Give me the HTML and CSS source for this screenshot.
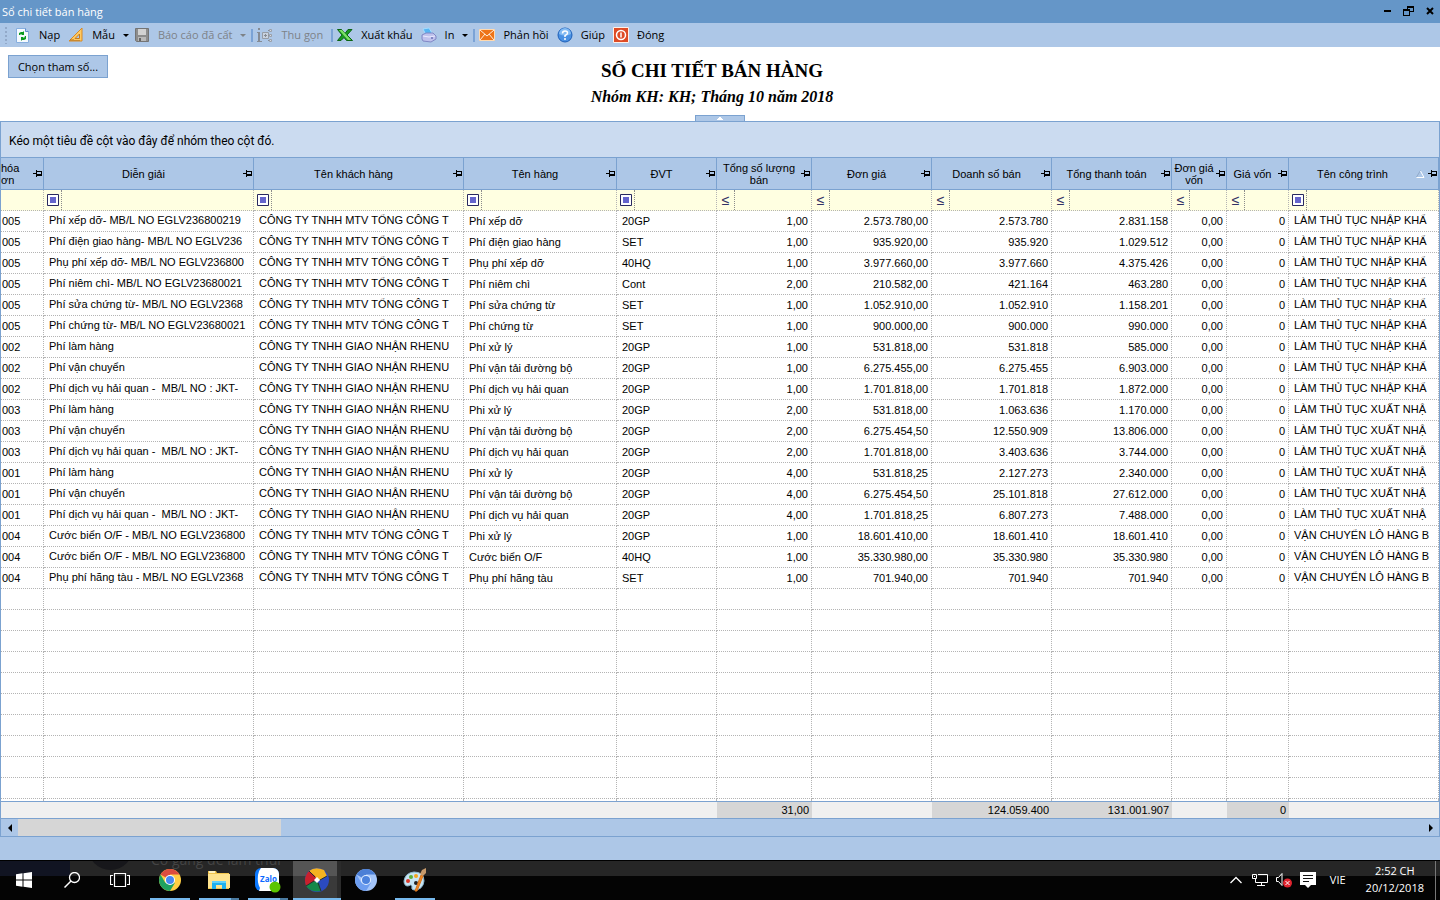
FILE: index.html
```html
<!DOCTYPE html>
<html lang="vi">
<head>
    <meta charset="UTF-8">
    <meta name="viewport" content="width=device-width, initial-scale=1.0">
    <title>Sổ chi tiết bán hàng</title>
    <link rel="stylesheet" href="styles.css">
</head>
<body>
    <svg class="defs" width="0" height="0">
        <symbol id="pin" viewBox="0 0 9 7">
            <path d="M0 3h3v1H0zM3 0h1v7H3zM4 1h5v5H4z" fill="#000"/>
            <path d="M4 2h4v2H4z" fill="#adc7e7"/>
        </symbol>
        <symbol id="box" viewBox="0 0 12 12">
            <path d="M.5 .5h11v11H.5z" fill="#fff" stroke="#29295f"/>
            <path d="M3 3h6v6H3z" fill="#6666cc"/>
        </symbol>
    </svg>

    <header class="titlebar">
        <span class="titlebar-text">Sổ chi tiết bán hàng</span>
        <button class="win-btn" aria-label="Thu nhỏ"><svg width="12" height="12"><path d="M2 5h7v2H2z"/></svg></button>
        <button class="win-btn" aria-label="Khôi phục"><svg width="12" height="12"><path d="M4 1h7v6H7V6h3V3H5v1H4zM0 4h7v7H0zM1 6v4h5V6z" fill-rule="evenodd"/></svg></button>
        <button class="win-btn" aria-label="Đóng cửa sổ"><svg width="12" height="12"><path d="M3 3l6 6M9 3l-6 6" stroke="#000" stroke-width="2"/></svg></button>
    </header>

    <nav class="toolbar">
        <span class="grip"></span>
        <button class="tool">
            <svg width="16" height="16"><path d="M1.500 1.500h9l3 3v11h-12z" fill="#f5faff" stroke="#86aede"/><path d="M10.500 1.500v3h3" fill="#b9d2f0" stroke="#5e8dcc"/><path d="M4 8V6l2-1h2l1-1v4H6l1-1H6L5 8zM11 9v3l-2 1H7l-1 1v-4h3l-1 1h1l1-2z" fill="#0b9a20"/></svg>
            Nạp
        </button>
        <button class="tool">
            <svg width="16" height="16"><path d="M1 14L14 1v13z" fill="#ffca63" stroke="#d98a22"/><path d="M7 11.500L11.500 7v4.500z" fill="#adc7e7" stroke="#c97b1c"/><path d="M3 14v-2M5 14v-2M7 14v-1M9 14v-1M11 14v-1" stroke="#a9681b"/></svg>
            Mẫu
            <svg class="caret" width="6" height="3"><path d="M0 0h6L3 3z"/></svg>
        </button>
        <button class="tool" disabled>
            <svg width="16" height="16"><path d="M1.500 1.500h13v13h-12l-1-1z" fill="#8d8d8d" stroke="#747474"/><path d="M4 2h8v6H4z" fill="#d2d2d2"/><path d="M4 10h8v4H4z" fill="#b9b9b9"/><path d="M5 11h2v3H5z" fill="#666"/></svg>
            Báo cáo đã cất
            <svg class="caret" width="6" height="3"><path d="M0 0h6L3 3z"/></svg>
        </button>
        <span class="sep"></span>
        <button class="tool" disabled>
            <svg width="16" height="16"><path d="M0 5h3v9h2v1H0v-1h1V6H0zM1 1h2v2H1z" fill="#858b94"/><path d="M5.500 5.500h6v6h-6z" fill="#c9d3e0" stroke="#969ca5"/><path d="M7 8.500h3M8.500 7v3M11 3.500h2M11 13.500h2M11.500 8.500h2" stroke="#858b94"/><path d="M12.500 2.500h2v2h-2zM12.500 7.500h2v2h-2zM12.500 12.500h2v2h-2z" fill="#d5dbe4" stroke="#999fa8"/></svg>
            Thu gọn
        </button>
        <span class="sep"></span>
        <button class="tool">
            <svg width="16" height="16"><path d="M.5 2.500h4l3.500 4 3-4h4l-5 5.500 5.500 5.500h-6L7 10.500l-3 3H.5L5 8z" fill="#199b22" stroke="#0b6413"/><path d="M2 3l9 10h3L5 3z" fill="#7ee067"/></svg>
            Xuất khẩu
        </button>
        <button class="tool">
            <svg width="16" height="16"><path d="M2 2l6-1 3 5-6 2z" fill="#58b5f2" stroke="#a3dcff"/><path d="M1 8l4-2 7 0 3 3v3l-5 3-8-1-1-2z" fill="#bfc1ec" stroke="#8087c5"/><path d="M2 9l6 1 6-1" fill="none" stroke="#e9eaff"/><circle cx="11" cy="11" r="1" fill="#6d73b8"/></svg>
            In
            <svg class="caret" width="6" height="3"><path d="M0 0h6L3 3z"/></svg>
        </button>
        <span class="sep"></span>
        <button class="tool">
            <svg width="16" height="16"><path d="M.5 2.500h15v11H.5z" fill="#ee7418" stroke="#ffd9ae"/><path d="M1 3l7 6 7-6M1 13l5-6M15 13l-5-6" fill="none" stroke="#fff1df"/></svg>
            Phản hồi
        </button>
        <button class="tool">
            <svg width="16" height="16"><circle cx="8" cy="8" r="7" fill="#4a91e3" stroke="#1d5fb8"/><path d="M2 7a6 6 0 0 1 12 0q-6 3-12 0" fill="#83bbf3"/><path d="M5.500 6.500q0-2.500 2.500-2.500t2.500 2Q10.500 7.500 8 8.500V10M8 11v2" fill="none" stroke="#fff" stroke-width="1.500"/></svg>
            Giúp
        </button>
        <button class="tool">
            <svg width="16" height="16"><path d="M.5 .5h15v15H.5z" fill="#de4b25" stroke="#fff0e8"/><circle cx="8" cy="8" r="4.500" fill="none" stroke="#fff" stroke-width="1.500"/><path d="M8 5.500v5" stroke="#fff" stroke-width="1.500"/></svg>
            Đóng
        </button>
    </nav>

    <section class="report-head">
        <button class="param-btn">Chọn tham số...</button>
        <div class="report-title">
            <h1>SỔ CHI TIẾT BÁN HÀNG</h1>
            <h2>Nhóm KH: KH; Tháng 10 năm 2018</h2>
        </div>
        <button class="collapse" aria-label="Thu gọn tiêu đề"><svg width="6" height="3"><path d="M2 0h2v1h1v1h1v1H0V2h1V1h1z" fill="#fff"/></svg></button>
    </section>

    <main class="grid">
        <div class="group-panel">Kéo một tiêu đề cột vào đây để nhóm theo cột đó.</div>
        <table class="sales">
            <colgroup>
                <col class="c-invoice"><col class="c-desc"><col class="c-desc"><col class="c-item"><col class="c-unit"><col class="c-qty">
                <col class="c-money"><col class="c-money"><col class="c-money"><col class="c-cost"><col class="c-cogs"><col class="c-project">
            </colgroup>
            <thead>
                <tr class="heads">
                    <th><div class="head head-cut"><span>hóa<br>ơn</span><svg class="pin"><use href="#pin"/></svg></div></th>
                    <th><div class="head"><span>Diễn giải</span><svg class="pin"><use href="#pin"/></svg></div></th>
                    <th><div class="head"><span>Tên khách hàng</span><svg class="pin"><use href="#pin"/></svg></div></th>
                    <th><div class="head"><span>Tên hàng</span><svg class="pin"><use href="#pin"/></svg></div></th>
                    <th><div class="head"><span>ĐVT</span><svg class="pin"><use href="#pin"/></svg></div></th>
                    <th><div class="head"><span>Tổng số lượng bán</span><svg class="pin"><use href="#pin"/></svg></div></th>
                    <th><div class="head"><span>Đơn giá</span><svg class="pin"><use href="#pin"/></svg></div></th>
                    <th><div class="head"><span>Doanh số bán</span><svg class="pin"><use href="#pin"/></svg></div></th>
                    <th><div class="head"><span>Tổng thanh toán</span><svg class="pin"><use href="#pin"/></svg></div></th>
                    <th><div class="head"><span>Đơn giá vốn</span><svg class="pin"><use href="#pin"/></svg></div></th>
                    <th><div class="head"><span>Giá vốn</span><svg class="pin"><use href="#pin"/></svg></div></th>
                    <th><div class="head"><span>Tên công trình</span><svg class="sort" width="9" height="8"><path d="M.5 7L4.500 .5" stroke="#8fa9c9"/><path d="M4.500 1L8 7.500H.5" fill="none" stroke="#fff"/></svg><svg class="pin"><use href="#pin"/></svg></div></th>
                </tr>
                <tr class="filters">
                    <td></td>
                    <td><div class="filter"><button aria-label="Kiểu lọc diễn giải"><svg class="box"><use href="#box"/></svg></button><input type="text" aria-label="Lọc diễn giải"></div></td>
                    <td><div class="filter"><button aria-label="Kiểu lọc khách hàng"><svg class="box"><use href="#box"/></svg></button><input type="text" aria-label="Lọc khách hàng"></div></td>
                    <td><div class="filter"><button aria-label="Kiểu lọc tên hàng"><svg class="box"><use href="#box"/></svg></button><input type="text" aria-label="Lọc tên hàng"></div></td>
                    <td><div class="filter"><button aria-label="Kiểu lọc ĐVT"><svg class="box"><use href="#box"/></svg></button><input type="text" aria-label="Lọc ĐVT"></div></td>
                    <td><div class="filter"><button>≤</button><input type="text" aria-label="Lọc số lượng"></div></td>
                    <td><div class="filter"><button>≤</button><input type="text" aria-label="Lọc đơn giá"></div></td>
                    <td><div class="filter"><button>≤</button><input type="text" aria-label="Lọc doanh số"></div></td>
                    <td><div class="filter"><button>≤</button><input type="text" aria-label="Lọc thanh toán"></div></td>
                    <td><div class="filter"><button>≤</button><input type="text" aria-label="Lọc đơn giá vốn"></div></td>
                    <td><div class="filter"><button>≤</button><input type="text" aria-label="Lọc giá vốn"></div></td>
                    <td><div class="filter"><button aria-label="Kiểu lọc công trình"><svg class="box"><use href="#box"/></svg></button><input type="text" aria-label="Lọc công trình"></div></td>
                </tr>
            </thead>
            <tbody>
                <tr><td>005</td><td>Phí xếp dỡ- MB/L NO EGLV236800219</td><td>CÔNG TY TNHH MTV TỔNG CÔNG T</td><td>Phí xếp dỡ</td><td>20GP</td><td>1,00</td><td>2.573.780,00</td><td>2.573.780</td><td>2.831.158</td><td>0,00</td><td>0</td><td>LÀM THỦ TỤC NHẬP KHẨ</td></tr>
                <tr><td>005</td><td>Phí điện giao hàng- MB/L NO EGLV236</td><td>CÔNG TY TNHH MTV TỔNG CÔNG T</td><td>Phí điện giao hàng</td><td>SET</td><td>1,00</td><td>935.920,00</td><td>935.920</td><td>1.029.512</td><td>0,00</td><td>0</td><td>LÀM THỦ TỤC NHẬP KHẨ</td></tr>
                <tr><td>005</td><td>Phụ phí xếp dỡ- MB/L NO EGLV236800</td><td>CÔNG TY TNHH MTV TỔNG CÔNG T</td><td>Phụ phí xếp dỡ</td><td>40HQ</td><td>1,00</td><td>3.977.660,00</td><td>3.977.660</td><td>4.375.426</td><td>0,00</td><td>0</td><td>LÀM THỦ TỤC NHẬP KHẨ</td></tr>
                <tr><td>005</td><td>Phí niêm chì- MB/L NO EGLV23680021</td><td>CÔNG TY TNHH MTV TỔNG CÔNG T</td><td>Phí niêm chì</td><td>Cont</td><td>2,00</td><td>210.582,00</td><td>421.164</td><td>463.280</td><td>0,00</td><td>0</td><td>LÀM THỦ TỤC NHẬP KHẨ</td></tr>
                <tr><td>005</td><td>Phí sửa chứng từ- MB/L NO EGLV2368</td><td>CÔNG TY TNHH MTV TỔNG CÔNG T</td><td>Phí sửa chứng từ</td><td>SET</td><td>1,00</td><td>1.052.910,00</td><td>1.052.910</td><td>1.158.201</td><td>0,00</td><td>0</td><td>LÀM THỦ TỤC NHẬP KHẨ</td></tr>
                <tr><td>005</td><td>Phí chứng từ- MB/L NO EGLV23680021</td><td>CÔNG TY TNHH MTV TỔNG CÔNG T</td><td>Phí chứng từ</td><td>SET</td><td>1,00</td><td>900.000,00</td><td>900.000</td><td>990.000</td><td>0,00</td><td>0</td><td>LÀM THỦ TỤC NHẬP KHẨ</td></tr>
                <tr><td>002</td><td>Phí làm hàng</td><td>CÔNG TY TNHH GIAO NHẬN RHENU</td><td>Phí xử lý</td><td>20GP</td><td>1,00</td><td>531.818,00</td><td>531.818</td><td>585.000</td><td>0,00</td><td>0</td><td>LÀM THỦ TỤC NHẬP KHẨ</td></tr>
                <tr><td>002</td><td>Phí vận chuyển</td><td>CÔNG TY TNHH GIAO NHẬN RHENU</td><td>Phí vận tải đường bộ</td><td>20GP</td><td>1,00</td><td>6.275.455,00</td><td>6.275.455</td><td>6.903.000</td><td>0,00</td><td>0</td><td>LÀM THỦ TỤC NHẬP KHẨ</td></tr>
                <tr><td>002</td><td>Phí dịch vụ hải quan -&nbsp; MB/L NO : JKT-</td><td>CÔNG TY TNHH GIAO NHẬN RHENU</td><td>Phí dịch vụ hải quan</td><td>20GP</td><td>1,00</td><td>1.701.818,00</td><td>1.701.818</td><td>1.872.000</td><td>0,00</td><td>0</td><td>LÀM THỦ TỤC NHẬP KHẨ</td></tr>
                <tr><td>003</td><td>Phí làm hàng</td><td>CÔNG TY TNHH GIAO NHẬN RHENU</td><td>Phi xử lý</td><td>20GP</td><td>2,00</td><td>531.818,00</td><td>1.063.636</td><td>1.170.000</td><td>0,00</td><td>0</td><td>LÀM THỦ TỤC XUẤT NHẬ</td></tr>
                <tr><td>003</td><td>Phí vận chuyển</td><td>CÔNG TY TNHH GIAO NHẬN RHENU</td><td>Phí vận tải đường bộ</td><td>20GP</td><td>2,00</td><td>6.275.454,50</td><td>12.550.909</td><td>13.806.000</td><td>0,00</td><td>0</td><td>LÀM THỦ TỤC XUẤT NHẬ</td></tr>
                <tr><td>003</td><td>Phí dịch vụ hải quan -&nbsp; MB/L NO : JKT-</td><td>CÔNG TY TNHH GIAO NHẬN RHENU</td><td>Phí dịch vụ hải quan</td><td>20GP</td><td>2,00</td><td>1.701.818,00</td><td>3.403.636</td><td>3.744.000</td><td>0,00</td><td>0</td><td>LÀM THỦ TỤC XUẤT NHẬ</td></tr>
                <tr><td>001</td><td>Phí làm hàng</td><td>CÔNG TY TNHH GIAO NHẬN RHENU</td><td>Phí xử lý</td><td>20GP</td><td>4,00</td><td>531.818,25</td><td>2.127.273</td><td>2.340.000</td><td>0,00</td><td>0</td><td>LÀM THỦ TỤC XUẤT NHẬ</td></tr>
                <tr><td>001</td><td>Phí vận chuyển</td><td>CÔNG TY TNHH GIAO NHẬN RHENU</td><td>Phí vận tải đường bộ</td><td>20GP</td><td>4,00</td><td>6.275.454,50</td><td>25.101.818</td><td>27.612.000</td><td>0,00</td><td>0</td><td>LÀM THỦ TỤC XUẤT NHẬ</td></tr>
                <tr><td>001</td><td>Phí dịch vụ hải quan -&nbsp; MB/L NO : JKT-</td><td>CÔNG TY TNHH GIAO NHẬN RHENU</td><td>Phí dịch vụ hải quan</td><td>20GP</td><td>4,00</td><td>1.701.818,25</td><td>6.807.273</td><td>7.488.000</td><td>0,00</td><td>0</td><td>LÀM THỦ TỤC XUẤT NHẬ</td></tr>
                <tr><td>004</td><td>Cước biển O/F - MB/L NO EGLV236800</td><td>CÔNG TY TNHH MTV TỔNG CÔNG T</td><td>Phi xử lý</td><td>20GP</td><td>1,00</td><td>18.601.410,00</td><td>18.601.410</td><td>18.601.410</td><td>0,00</td><td>0</td><td>VẬN CHUYỂN LÔ HÀNG B</td></tr>
                <tr><td>004</td><td>Cước biển O/F - MB/L NO EGLV236800</td><td>CÔNG TY TNHH MTV TỔNG CÔNG T</td><td>Cước biển O/F</td><td>40HQ</td><td>1,00</td><td>35.330.980,00</td><td>35.330.980</td><td>35.330.980</td><td>0,00</td><td>0</td><td>VẬN CHUYỂN LÔ HÀNG B</td></tr>
                <tr><td>004</td><td>Phụ phí hãng tàu - MB/L NO EGLV2368</td><td>CÔNG TY TNHH MTV TỔNG CÔNG T</td><td>Phụ phí hãng tàu</td><td>SET</td><td>1,00</td><td>701.940,00</td><td>701.940</td><td>701.940</td><td>0,00</td><td>0</td><td>VẬN CHUYỂN LÔ HÀNG B</td></tr>
                <tr><td></td><td></td><td></td><td></td><td></td><td></td><td></td><td></td><td></td><td></td><td></td><td></td></tr>
                <tr><td></td><td></td><td></td><td></td><td></td><td></td><td></td><td></td><td></td><td></td><td></td><td></td></tr>
                <tr><td></td><td></td><td></td><td></td><td></td><td></td><td></td><td></td><td></td><td></td><td></td><td></td></tr>
                <tr><td></td><td></td><td></td><td></td><td></td><td></td><td></td><td></td><td></td><td></td><td></td><td></td></tr>
                <tr><td></td><td></td><td></td><td></td><td></td><td></td><td></td><td></td><td></td><td></td><td></td><td></td></tr>
                <tr><td></td><td></td><td></td><td></td><td></td><td></td><td></td><td></td><td></td><td></td><td></td><td></td></tr>
                <tr><td></td><td></td><td></td><td></td><td></td><td></td><td></td><td></td><td></td><td></td><td></td><td></td></tr>
                <tr><td></td><td></td><td></td><td></td><td></td><td></td><td></td><td></td><td></td><td></td><td></td><td></td></tr>
                <tr><td></td><td></td><td></td><td></td><td></td><td></td><td></td><td></td><td></td><td></td><td></td><td></td></tr>
                <tr><td></td><td></td><td></td><td></td><td></td><td></td><td></td><td></td><td></td><td></td><td></td><td></td></tr>
                <tr class="tail"><td></td><td></td><td></td><td></td><td></td><td></td><td></td><td></td><td></td><td></td><td></td><td></td></tr>
            </tbody>
            <tfoot>
                <tr><td></td><td></td><td></td><td></td><td></td><td class="sum">31,00</td><td></td><td class="sum">124.059.400</td><td class="sum">131.001.907</td><td></td><td class="sum">0</td><td></td></tr>
            </tfoot>
        </table>
        <div class="scrollbar">
            <button aria-label="Cuộn trái"><svg width="4" height="8"><path d="M4 0v8L0 4z"/></svg></button>
            <div class="track"><div class="thumb"></div></div>
            <button aria-label="Cuộn phải"><svg width="4" height="8"><path d="M0 0v8l4-4z"/></svg></button>
        </div>
    </main>

    <footer class="taskbar">
        <div class="behind"><div class="behind-dark"></div><div class="behind-photo"></div><span class="behind-text">Cố gắng để làm thui</span></div>
        <div class="apps">
            <button aria-label="Start"><svg width="16" height="16"><path d="M0 2.200L6.500 1.300v6.200H0zM7.500 1.200L16 0v7.500H7.500zM0 8.500h6.500v6.200L0 13.800zM7.500 8.500H16V16l-8.500-1.200z" fill="#fff"/></svg></button>
            <button aria-label="Tìm kiếm"><svg width="16" height="16" fill="none" stroke="#fff"><circle cx="10.500" cy="5.500" r="5" stroke-width="1.300"/><path d="M7 9L.5 15.500" stroke-width="1.500"/></svg></button>
            <button aria-label="Task view"><svg width="20" height="16" fill="none" stroke="#fff"><path d="M4.500 1.500h11v13h-11zM3 3.500H.5v9H3M17 3.500h2.500v9H17" stroke-width="1.200"/></svg></button>
        </div>
        <div class="apps apps-pinned">
            <button class="running" aria-label="Chrome"><svg width="22" height="22" viewBox="0 0 22 22"><circle cx="11" cy="11" r="11" fill="#ffce44"/><path d="M11 11L1.500 5.500A11 11 0 0 1 20.500 5.500H11z" fill="#dc4c3f"/><path d="M1.500 5.500A11 11 0 0 0 11 22l5-8.300-9.700 0z" fill="#1fa260"/><circle cx="11" cy="11" r="5" fill="#fff"/><circle cx="11" cy="11" r="4" fill="#4688f1"/></svg></button>
            <button class="running stacked" aria-label="Explorer"><svg width="22" height="20"><path d="M0 1h8l1 2h12v16H0z" fill="#f2c64e"/><path d="M0 4h22v14H0z" fill="#ffe48f"/><path d="M1 1h6v2H1z" fill="#fff3c2"/><path d="M4 19v-8h14v8h-4v-4H8v4z" fill="#1fb0ee"/><path d="M4 11h14v2H4z" fill="#5fd0fa"/></svg></button>
            <button class="running stacked" aria-label="Zalo"><svg width="26" height="26"><rect x="0" y="1" width="24" height="23" rx="6" fill="#0a78ff"/><path d="M6 1h12a6 6 0 0 1 6 6v12a5 5 0 0 1-5 5H8l-4 0 1-3Q2 16 3 8q1-5 3-7" fill="#fff"/><text x="5" y="15" class="zalo">Zalo</text><circle cx="20" cy="20" r="5.500" fill="#5bc500"/></svg></button>
            <button class="running active" aria-label="Phần mềm kế toán"><svg width="24" height="24" viewBox="0 0 24 24"><circle cx="12" cy="12" r="12" fill="#2b4ac0"/><path d="M9 9L4 3Q10-2 19 2l3 6-7 4z" fill="#f5b320"/><path d="M10 8L4 3Q-2 9 1 18l9-4 1-4z" fill="#c9202c"/><path d="M9 13l-8 5q5 7 15 5l-2-8z" fill="#14894a"/><path d="M4 3l6 6M22 8l-7 4M16 23l-3-8M1 18l8-5" stroke="#26302d"/><path d="M12 9l3 3-3 3-3-3z" fill="#fff"/></svg></button>
            <button aria-label="Chromium"><svg width="22" height="22" viewBox="0 0 22 22"><circle cx="11" cy="11" r="11" fill="#a4c5fa"/><path d="M11 11L1.500 5.500A11 11 0 0 1 20.500 5.500H11z" fill="#4b7fd6"/><path d="M1.500 5.500A11 11 0 0 0 11 22l5-8.300-9.700 0z" fill="#6c9df0"/><circle cx="11" cy="11" r="5" fill="#e4efff"/><circle cx="11" cy="11" r="4" fill="#4b82dd"/></svg></button>
            <button class="running" aria-label="Paint"><svg width="24" height="24"><path d="M1 13Q2 5 11 4q10 0 10 9-1 9-10 9-3 0-2-4-1-2-4 0-4 0-4-5" fill="#c7e4f3" stroke="#8fb8cf"/><circle cx="5" cy="13" r="2" fill="#d93a2b"/><circle cx="8" cy="9" r="2" fill="#5aae3a"/><circle cx="13" cy="8" r="2" fill="#f2a51f"/><circle cx="13" cy="15" r="2" fill="#222"/><path d="M12 23L18 7l2 1-6 15z" fill="#f08a24" stroke="#d9731a"/><path d="M17 6l2-4 4-2 0 5-3 3z" fill="#c79a6b"/></svg></button>
        </div>
        <div class="tray">
            <button class="tray-up" aria-label="Biểu tượng ẩn"><svg width="12" height="8"><path d="M.5 7L6 1.500 11.500 7" fill="none" stroke="#fff" stroke-width="1.300"/></svg></button>
            <button class="tray-icon" aria-label="Mạng"><svg width="16" height="14" fill="none" stroke="#fff"><path d="M6 1.500h9.500v8H3.500V6M9.500 9.500v3M5 12.500h8M.5 1.500h4v4h-4zM2.500 3v1"/></svg></button>
            <button class="tray-icon" aria-label="Âm lượng"><svg width="16" height="16"><path d="M.5 5.500h2l3.500-4v12l-3.500-4h-2z" fill="none" stroke="#fff"/><circle cx="11.500" cy="11" r="4.500" fill="#e0242f"/><path d="M9.500 9l4 4M13.500 9l-4 4" stroke="#fff"/></svg></button>
            <button class="tray-icon" aria-label="Thông báo"><svg width="16" height="16"><path d="M0 0h16v13h-5l-3 3-3-3H0z" fill="#fff"/><path d="M3 3.500h10M3 6.500h10M3 9.500h6" stroke="#111"/></svg></button>
            <button class="lang">VIE</button>
            <button class="clock">2:52 CH<br>20/12/2018</button>
        </div>
    </footer>
</body>
</html>
```
FILE: styles.css
```css
* {
    box-sizing: border-box;
}
body {
    margin: 0;
    min-height: 100vh;
    display: flex;
    flex-direction: column;
    background: #adc7e7;
    font-family: "Open Sans", "Noto Sans", sans-serif;
    font-size: 11px;
    color: #000;
}
button {
    margin: 0;
    padding: 0;
    border: 0;
    background: none;
    font: inherit;
    color: inherit;
}
svg {
    display: block;
    flex: none;
}
.defs {
    position: absolute;
}

/* title bar */
.titlebar {
    display: flex;
    align-items: center;
    height: 23px;
    padding: 0 0 0 2px;
    background: #6596c8;
    color: #fff;
}
.titlebar-text {
    flex: 1;
}
.win-btn {
    width: 21px;
    height: 20px;
    display: flex;
    justify-content: center;
}
.win-btn svg {
    margin-top: 3px;
}

/* toolbar */
.toolbar {
    display: flex;
    align-items: center;
    height: 24px;
    background: #adc7e7;
}
.grip {
    width: 4px;
    height: 18px;
    margin: 0 7px 0 4px;
    background: radial-gradient(#92a9c9 1px, transparent 1px) 0 0 / 4px 4px;
}
.tool {
    display: flex;
    align-items: center;
    gap: 8px;
    margin-right: 8px;
    line-height: 14px;
    white-space: nowrap;
}
.tool:disabled {
    color: #7d8287;
}
.tool .caret {
    fill: currentColor;
    margin-right: -3px;
}
.sep {
    width: 2px;
    height: 13px;
    margin-right: 4px;
    background: #7ba3d6;
}

/* report header */
.report-head {
    display: grid;
    grid-template-columns: 100px 1fr 100px;
    column-gap: 8px;
    padding: 8px 8px 0;
    background: #fff;
}
.param-btn {
    height: 23px;
    border: 1px solid #7ba2d0;
    background: #adc7e7;
}
.report-title {
    height: 60px;
    padding-right: 16px;
    text-align: center;
    font-family: "Liberation Serif", "Times New Roman", serif;
}
.report-title h1 {
    margin: 4px 0 0;
    font-size: 19px;
    line-height: 24px;
}
.report-title h2 {
    margin: 2px 0 0;
    font-size: 16px;
    line-height: 24px;
    font-style: italic;
}
.collapse {
    grid-column: 1 / -1;
    justify-self: center;
    display: flex;
    justify-content: center;
    width: 50px;
    height: 6px;
    padding-top: 1px;
    border: 1px solid #7ba2d0;
    border-bottom: 0;
    background: #adc7e7;
}

/* grid */
.grid {
    border: 1px solid #7ba2d0;
    font-family: "Liberation Sans", Arial, sans-serif;
    font-size: 11px;
}
.group-panel {
    height: 35px;
    padding: 2px 8px 0;
    background: #cbdbf0;
    font-family: Roboto, sans-serif;
    font-size: 12px;
    line-height: 34px;
}
.sales {
    width: 100%;
    table-layout: fixed;
    border-collapse: separate;
    border-spacing: 0;
    background: #fff;
}
.c-invoice { width: 43px; }
.c-desc { width: 210px; }
.c-item { width: 153px; }
.c-unit { width: 100px; }
.c-qty { width: 95px; }
.c-money { width: 120px; }
.c-cost { width: 55px; }
.c-cogs { width: 62px; }
.c-project { width: 150px; }

.sales th {
    height: 33px;
    padding: 0;
    border: solid #7ba2d0;
    border-width: 1px 1px 1px 0;
    background: #adc7e7;
    font-weight: normal;
    line-height: 12px;
}
.head {
    display: flex;
    align-items: center;
    height: 31px;
    padding-right: 1px;
}
.head span {
    flex: 1;
}
.head-cut span {
    text-align: left;
}
.pin {
    width: 9px;
    height: 7px;
}
.sort {
    margin-right: 3px;
}
.sales td {
    height: 21px;
    padding: 0 3px 0 5px;
    border: dotted #b4b4b4;
    border-width: 0 1px 1px 0;
    line-height: 18px;
    white-space: nowrap;
    overflow: hidden;
}
.sales .filters td {
    height: 21px;
    padding: 0;
    background: #ffffe1;
}
.filter {
    display: flex;
    height: 20px;
}
.filter button {
    flex: none;
    display: flex;
    align-items: center;
    justify-content: center;
    width: 18px;
    border-right: 1px dotted #8c8c8c;
    color: #333366;
    font-size: 14px;
}
.filter .box {
    width: 12px;
    height: 12px;
}
.filter input {
    flex: 1;
    min-width: 0;
    padding: 0 3px;
    border: 0;
    background: none;
    font: inherit;
}
.sales tbody td {
    padding-bottom: 1px;
}
.sales tbody td:first-child {
    padding-left: 1px;
}
.sales tbody td:nth-child(2),
.sales tbody td:nth-child(3),
.sales tbody td:last-child {
    padding-bottom: 2px;
}
.sales tbody td:nth-child(n+6):nth-child(-n+11),
.sales tfoot td {
    text-align: right;
}
.sales .tail td,
.sales .tail td:nth-child(n) {
    height: 2px;
    padding: 0;
    border-bottom: 0;
}
.sales tfoot td {
    height: 18px;
    padding: 0 3px;
    border: solid #7ba2d0;
    border-width: 1px 0;
    background: #f0f0f0;
    line-height: 16px;
}
.sales tfoot .sum {
    background: #d6d6d6;
}
.scrollbar {
    display: flex;
    height: 17px;
    background: #adc7e7;
}
.scrollbar button {
    display: flex;
    align-items: center;
    justify-content: center;
    width: 17px;
}
.track {
    flex: 1;
}
.thumb {
    width: 263px;
    height: 17px;
    background: #d6d6d6;
}

/* taskbar */
.taskbar {
    position: relative;
    display: flex;
    height: 40px;
    margin-top: auto;
    overflow: hidden;
    border-top: 1px solid #000;
    background: #040404;
    color: #fff;
}
.behind {
    position: absolute;
    top: 0;
    left: 0;
    right: 0;
    height: 15px;
    overflow: hidden;
    background: #262626;
}
.behind-dark {
    width: 70px;
    height: 15px;
    background: #111422;
}
.behind-photo {
    position: absolute;
    left: 88px;
    top: -36px;
    width: 45px;
    height: 45px;
    border-radius: 50%;
    background: #17171b;
}
.behind-text {
    position: absolute;
    left: 151px;
    top: -11px;
    color: #444;
    font-size: 14px;
    line-height: 20px;
}
.apps {
    position: relative;
    display: flex;
}
.apps-pinned {
    gap: 1px;
    margin-left: 2px;
}
.apps button {
    display: flex;
    align-items: center;
    justify-content: center;
    width: 48px;
    height: 39px;
    padding-bottom: 2px;
}
.apps .running {
    background: linear-gradient(#76b9ed, #76b9ed) center bottom / 40px 2px no-repeat;
}
.apps .stacked {
    background: linear-gradient(to right, #76b9ed 32px, #4b7ba1 32px) center bottom / 40px 2px no-repeat;
}
.apps .active {
    background: linear-gradient(#76b9ed, #76b9ed) center bottom / 48px 2px no-repeat, linear-gradient(to right, transparent 44px, #2b2b2b 44px), linear-gradient(#555 15px, #3a3a3a 15px);
}
.zalo {
    fill: #0a68ff;
    font-family: "Open Sans", sans-serif;
    font-size: 8px;
    font-weight: bold;
}
.tray {
    position: relative;
    display: flex;
    align-items: center;
    gap: 8px;
    margin-left: auto;
    margin-right: 4px;
    padding-right: 11px;
    padding-bottom: 2px;
    border-right: 1px solid #777;
}
.tray-up {
    margin-right: 2px;
}
.tray-icon {
    width: 16px;
}
.lang {
    margin: 0 12px 0 6px;
}
.clock {
    padding-bottom: 2px;
    text-align: center;
    line-height: 17px;
}
```
